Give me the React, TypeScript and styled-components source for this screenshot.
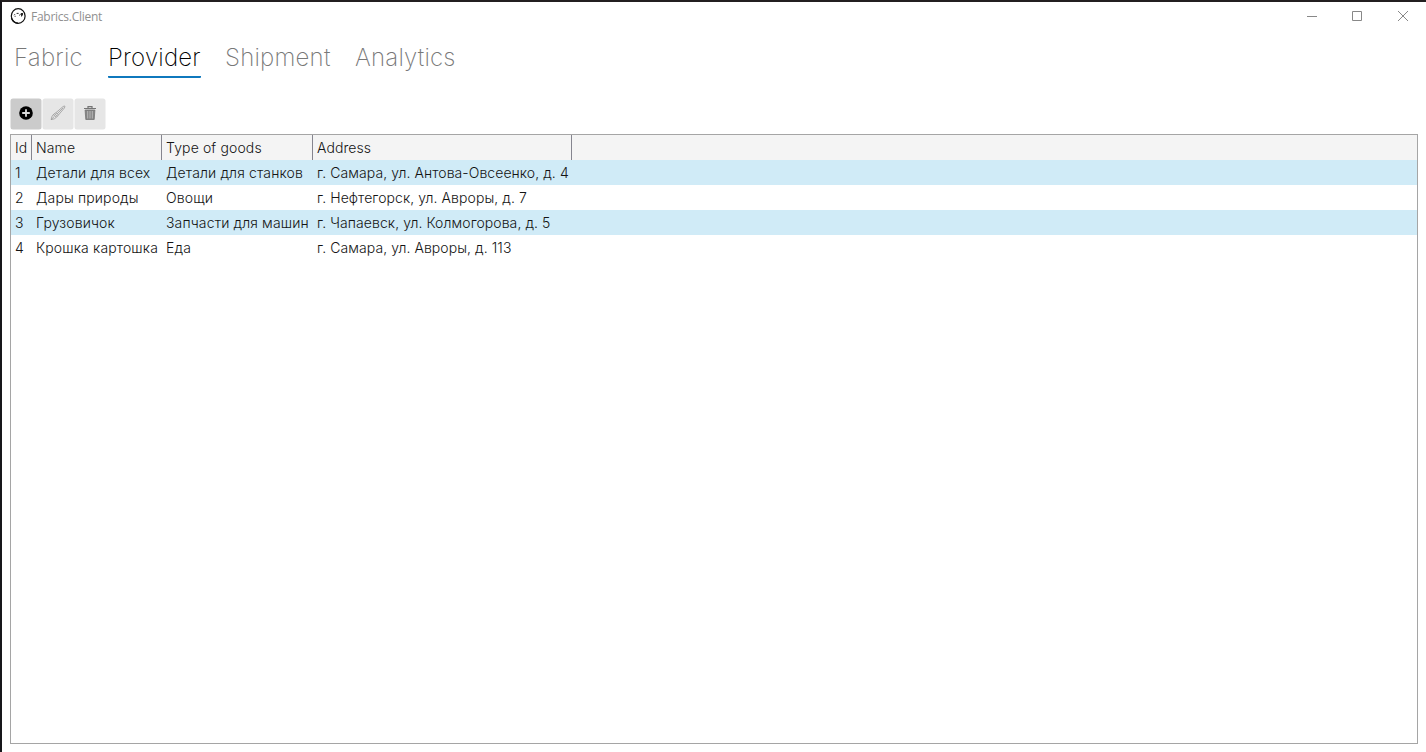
import React from "react";
import styled, { createGlobalStyle } from "styled-components";

const GlobalStyle = createGlobalStyle`
  * { box-sizing: border-box; }
  body { margin: 0; background: #fff; overflow: hidden; }
`;

const Window = styled.div`
  display: flex;
  flex-direction: column;
  width: 100vw;
  height: 100vh;
  border-top: 2px solid #231f20;
  border-left: 2px solid #17161a;
  background: #fff;
  font-family: Inter, "Liberation Sans", sans-serif;
  color: #141414;
`;

const TitleBar = styled.header`
  display: flex;
  align-items: center;
  height: 29px;
  flex: none;
  padding-left: 8px;
`;

const Logo = styled.svg`
  flex: none;
  margin-bottom: 1px;
`;

const AppTitle = styled.span`
  margin: 1px auto 0 5px;
  font-family: "Open Sans", "Noto Sans", sans-serif;
  font-size: 12px;
  line-height: 16px;
  letter-spacing: -0.26px;
  color: #909090;
`;

const WindowButton = styled.span<{ $shift?: number }>`
  display: flex;
  align-items: center;
  justify-content: center;
  width: 46px;
  height: 29px;
  padding: 0 0 1px ${(p) => p.$shift ?? 0}px;
`;

const Tabs = styled.nav`
  display: flex;
  flex: none;
  gap: 24px;
  height: 67px;
  padding: 7px 0 0 12px;
`;

const Tab = styled.div<{ $width: number; $active?: boolean }>`
  width: ${(p) => p.$width}px;
  height: 40px;
  border-bottom: 2px solid ${(p) => (p.$active ? "#0f78bd" : "transparent")};
  border-radius: 1px;
  font-size: 24px;
  font-weight: 240;
  line-height: 39px;
  white-space: nowrap;
  color: ${(p) => (p.$active ? "#000" : "#787878")};
`;

const Toolbar = styled.div`
  display: flex;
  flex: none;
  gap: 2px;
  height: 36px;
  padding: 1px 0 0 9px;
`;

const ToolButton = styled.button<{ $enabled?: boolean }>`
  display: flex;
  align-items: center;
  justify-content: center;
  width: 30px;
  height: 30px;
  padding: 0 0 2px;
  border: 0;
  border-radius: 2px;
  color: ${(p) => (p.$enabled ? "#cbcbcb" : "#e6e6e6")};
  background: currentColor;
  box-shadow: 0 0 0 0.5px currentColor;
`;

const Grid = styled.div`
  flex: 1;
  margin: 0 8px 8px;
  border: 1px solid #a5a5a5;
  font-size: 14px;
  font-weight: 350;
`;

const Row = styled.div<{ $fill: string }>`
  display: grid;
  grid-template-columns: 21px 130px 151px 259px 1fr;
  height: 25px;
  background: ${(p) => p.$fill};
`;

const Cell = styled.div<{ $header?: boolean; $spacing: number }>`
  height: 25px;
  padding-left: 4px;
  border-right: 1px solid ${(p) => (p.$header ? "#85858f" : "transparent")};
  line-height: 26px;
  letter-spacing: ${(p) => p.$spacing}px;
  white-space: nowrap;
`;

const LogoIcon = () => (
  <Logo width="16" height="16" viewBox="0 0 16 16" fill="none" stroke="#111">
    <ellipse cx="8.2" cy="8" rx="6.9" ry="7.3" strokeWidth="1.2" />
    <path d="M4 7.2 5 6.2M6.6 5.4h2M11.5 5v3.5M4.6 8.3h1M9.2 7.4l1.6-1.4M12.5 5v2.5" strokeWidth=".9" />
    <path d="M1.5 10.2C3.2 14.1 5.3 15.2 8 15.2" strokeWidth="1.5" />
  </Logo>
);

const PlusIcon = () => (
  <svg width="14" height="14" viewBox="0 0 14 14">
    <circle cx="7" cy="7" r="6.8" fill="#000" />
    <path d="M7 3.2v7.6M3.2 7h7.6" stroke="#dcdcdc" strokeWidth="1.8" />
  </svg>
);

const BrushIcon = () => (
  <svg width="16" height="16" viewBox="0 0 16 16" fill="none" stroke="#8f8f8f" strokeWidth="0.7">
    <path d="M5.8 7.8 13 1.6Q15.8-.2 14.4 3L8.6 9.8ZM5.8 7.8 3.2 9.7Q1.6 11.2 1.1 14.6 4.8 14.3 6.4 12.3L8.6 9.8M7.2 8.8 13.2 2.8" />
    <path d="m3.4 9.7 2.9 2.4M4.6 8.8l2.8 2.4M1.3 14.4 4.4 11.4" />
  </svg>
);

const TrashIcon = () => (
  <svg width="14" height="14" viewBox="0 0 14 14" fill="none" stroke="#757575">
    <path d="M1 2.5h12M5 2V.7h4V2" strokeWidth="1.2" />
    <path d="M2.1 4h9.8l-.7 9.5H2.8Z" fill="#858585" stroke="#757575" strokeWidth=".8" />
    <path d="M4.7 5v7.5M7 5v7.5M9.3 5v7.5" stroke="#c5c5c5" strokeWidth=".8" />
  </svg>
);

const tabs = [
  { name: "Fabric", width: 70 },
  { name: "Provider", width: 93 },
  { name: "Shipment", width: 106 },
  { name: "Analytics", width: 102 },
];

const TabLabel = styled.span`
  letter-spacing: 0.22px;
`;

const columns = [
  { title: "Id", spacing: 0 },
  { title: "Name", spacing: 0.13 },
  { title: "Type of goods", spacing: 0.13 },
  { title: "Address", spacing: 0.07 },
];

const providers = [
  ["1", "Детали для всех", "Детали для станков", "г. Самара, ул. Антова-Овсеенко, д. 4"],
  ["2", "Дары природы", "Овощи", "г. Нефтегорск, ул. Авроры, д. 7"],
  ["3", "Грузовичок", "Запчасти для машин", "г. Чапаевск, ул. Колмогорова, д. 5"],
  ["4", "Крошка картошка", "Еда", "г. Самара, ул. Авроры, д. 113"],
];

export default function App() {
  return (
    <Window>
      <GlobalStyle />
      <TitleBar>
        <LogoIcon />
        <AppTitle>Fabrics.Client</AppTitle>
        <WindowButton $shift={2}>
          <svg width="10" height="10" stroke="#888"><path d="M0 5.5h10" /></svg>
        </WindowButton>
        <WindowButton>
          <svg width="10" height="10" fill="none" stroke="#888"><path d="M.5.5h9v9h-9z" /></svg>
        </WindowButton>
        <WindowButton>
          <svg width="10" height="10" fill="none" stroke="#888"><path d="m0 0 10 10M10 0 0 10" /></svg>
        </WindowButton>
      </TitleBar>
      <Tabs>
        {tabs.map((tab) => (
          <Tab key={tab.name} $width={tab.width} $active={tab.name === "Provider"}>
            <TabLabel>{tab.name}</TabLabel>
          </Tab>
        ))}
      </Tabs>
      <Toolbar>
        <ToolButton $enabled aria-label="Add"><PlusIcon /></ToolButton>
        <ToolButton disabled aria-label="Edit"><BrushIcon /></ToolButton>
        <ToolButton disabled aria-label="Delete"><TrashIcon /></ToolButton>
      </Toolbar>
      <Grid>
        <Row $fill="#f4f4f4">
          {columns.map((column) => (
            <Cell key={column.title} $header $spacing={column.spacing}>{column.title}</Cell>
          ))}
        </Row>
        {providers.map((provider, index) => (
          <Row key={provider[0]} $fill={index % 2 ? "#fff" : "#d0ebf7"}>
            {provider.map((value, column) => (
              <Cell key={value} $spacing={columns[column].spacing}>{value}</Cell>
            ))}
          </Row>
        ))}
      </Grid>
    </Window>
  );
}
